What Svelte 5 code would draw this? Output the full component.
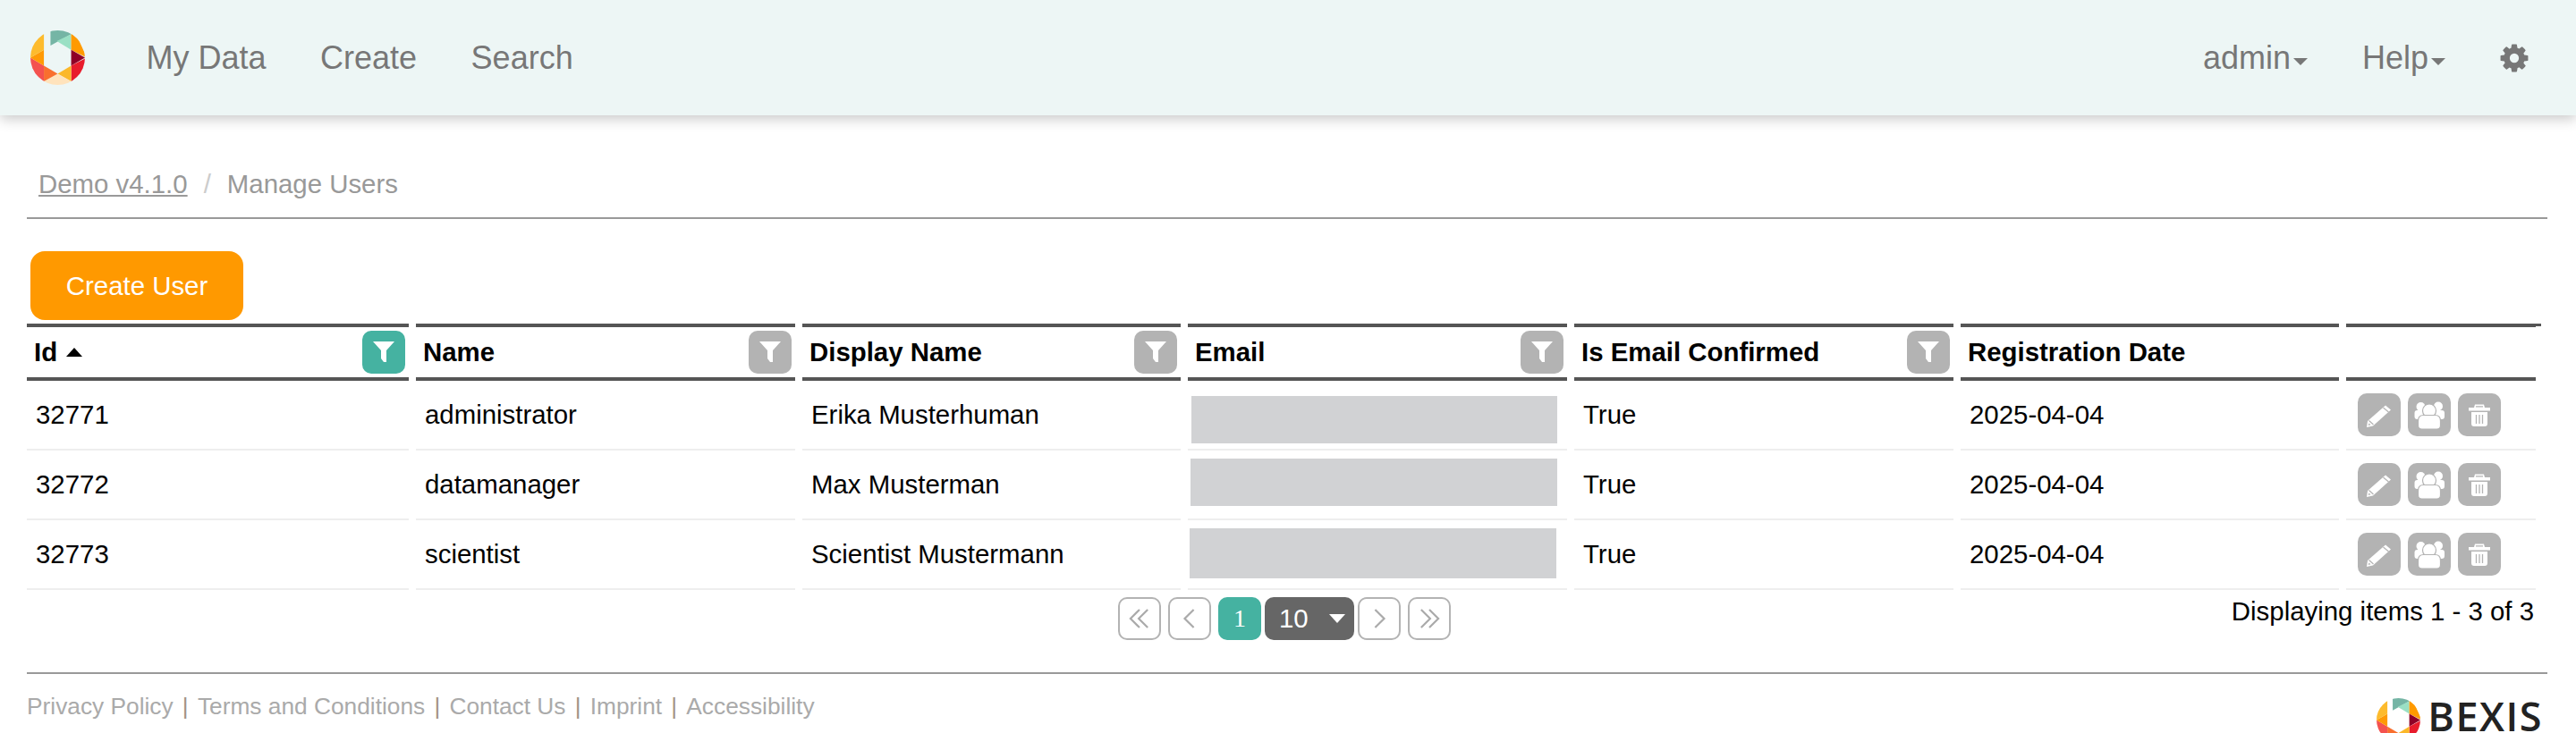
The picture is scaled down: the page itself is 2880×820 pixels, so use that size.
<script>
  const users = [
    { id: 32771, name: "administrator", display: "Erika Musterhuman", date: "2025-04-04" },
    { id: 32772, name: "datamanager", display: "Max Musterman", date: "2025-04-04" },
    { id: 32773, name: "scientist", display: "Scientist Mustermann", date: "2025-04-04" }
  ];

  const columns = [
    { title: "Id", sorted: true, active: true },
    { title: "Name" },
    { title: "Display Name" },
    { title: "Email" },
    { title: "Is Email Confirmed" },
    { title: "Registration Date", nofilter: true },
    { title: "", nofilter: true }
  ];

  const footerLinks = ["Privacy Policy", "Terms and Conditions", "Contact Us", "Imprint", "Accessibility"];

  const logoParts = [
    ["#75b5a5", "169,118 169,60 238,60 238,80"],
    ["#9ae0c4", "238,80 238,132 190,103"],
    ["#ff9a00", "238,80 250,70 290,158 238,132"],
    ["#8f0027", "238,132 284,158 238,185"],
    ["#e81c2c", "238,185 290,158 280,250 238,237"],
    ["#fbb82a", "238,185 238,237 193,212"],
    ["#ffe3bc", "147,237 193,212 238,237 238,260 147,260"],
    ["#f96f2e", "147,185 193,212 147,237"],
    ["#f4524f", "102,158 147,185 147,237 147,260 90,250 90,158"],
    ["#ff9a05", "102,158 147,132 147,185"],
    ["#fdbb2d", "147,70 147,132 102,158 90,158 90,70"]
  ];
</script>

{#snippet logo(cls)}
  <svg class={cls} viewBox="102 67 182 182">
    <defs>
      <clipPath id="clip-{cls}"><circle cx="193" cy="158" r="91" /></clipPath>
    </defs>
    <g clip-path="url(#clip-{cls})">
      {#each logoParts as part}
        <polygon fill={part[0]} points={part[1]} />
      {/each}
    </g>
  </svg>
{/snippet}

{#snippet filterIcon()}
  <svg viewBox="0 0 48 48"><polygon fill="#fff" points="12,12 36,12 27,22 27,35 24,35 21,31 21,22" /></svg>
{/snippet}

<header class="navbar">
  {@render logo("brand")}
  <nav class="nav_left">
    <a>My Data</a>
    <a>Create</a>
    <a>Search</a>
  </nav>
  <nav class="nav_right">
    <a class="admin">admin<span class="caret"></span></a>
    <a class="help">Help<span class="caret"></span></a>
    <svg class="gear" viewBox="0 0 1792 1792"><path fill="#777" d="M1152 896q0-106-75-181t-181-75-181 75-75 181 75 181 181 75 181-75 75-181zm512-109v222q0 12-8 23t-20 13l-185 28q-19 54-39 91 35 50 107 138 10 12 10 25t-9 23q-27 37-99 108t-94 71q-12 0-26-9l-138-108q-44 23-91 38-16 136-29 186-7 28-36 28h-222q-14 0-24.5-8.5t-11.5-21.5l-28-184q-49-16-90-37l-141 107q-10 9-25 9-14 0-25-11-126-114-165-168-7-10-7-23 0-12 8-23 15-21 51-66.5t54-70.5q-27-50-41-99l-183-27q-13-2-21-12.5t-8-23.5v-222q0-12 8-23t19-13l186-28q14-46 39-92-40-57-107-138-10-12-10-24 0-10 9-23 26-36 98.5-107.5t94.5-71.5q13 0 26 10l138 107q44-23 91-38 16-136 29-186 7-28 36-28h222q14 0 24.5 8.5t11.5 21.5l28 184q49 16 90 37l142-107q9-9 24-9 13 0 25 10 129 119 165 170 7 8 7 22 0 12-8 23-15 21-51 66.5t-54 70.5q26 50 41 98l183 28q13 2 21 12.5t8 23.5z" /></svg>
  </nav>
</header>

<main class="content">
  <div class="breadcrumb">
    <a>Demo v4.1.0</a>
    <span class="slash">/</span>
    <span>Manage Users</span>
  </div>

  <button class="create">Create User</button>

  <table class="grid">
    <colgroup>
      <col class="c427" /><col class="c424" /><col class="c423" /><col class="c424" />
      <col class="c424" /><col class="c423" /><col class="c212" />
    </colgroup>
    <thead>
      <tr>
        {#each columns as col}
          <th>
            <div class="th_inner">
              <span>{col.title}</span>
              {#if col.sorted}<span class="sort"></span>{/if}
              {#if !col.nofilter}
                <span class="filter" class:active={col.active}>{@render filterIcon()}</span>
              {/if}
            </div>
          </th>
        {/each}
      </tr>
    </thead>
    <tbody>
      {#each users as user, i}
        <tr>
          <td>{user.id}</td>
          <td>{user.name}</td>
          <td>{user.display}</td>
          <td class="email_cell"><div class="redacted r{i}"></div></td>
          <td>True</td>
          <td>{user.date}</td>
          <td class="actions_cell">
            <div class="actions">
              <span class="action">
                <svg viewBox="0 0 48 48">
                  <path fill="#fff" d="M31 13.500l6 5-20 18-7 1.500 1-7z" />
                  <path fill="none" stroke="#b3b3b3" stroke-width="1.2" d="M28.500 16l6 5M12.500 30.500l5 4.500" />
                  <path fill="#b3b3b3" d="M12.500 33.500l2 1.800-2.800.8z" />
                </svg>
              </span>
              <span class="action">
                <svg viewBox="0 0 48 48">
                  <circle fill="#fff" cx="14.500" cy="15" r="5" />
                  <circle fill="#fff" cx="34" cy="14.500" r="5" />
                  <path fill="#fff" d="M7.500 22q0-3 3-3h7q3 0 3 3v7h-10q-3 0-3-3zM28 22q0-3 3-3h7q3 0 3 3v4q0 3-3 3H28z" />
                  <circle fill="#fff" stroke="#b3b3b3" stroke-width="1.200" cx="24" cy="19.500" r="7.500" />
                  <path fill="#fff" stroke="#b3b3b3" stroke-width="1.200" d="M11.500 31q0-6.500 6-6.500h13q6 0 6 6.500v5q0 4-4 4h-17q-4 0-4-4z" />
                </svg>
              </span>
              <span class="action">
                <svg viewBox="0 0 48 48">
                  <path fill="#fff" d="M12 16h6l1-3.500h10l1 3.500h6v3.500H12zM15 21h18v13q0 3-3 3H18q-3 0-3-3z" />
                  <path fill="none" stroke="#b3b3b3" stroke-width="1.300" d="M20 14.800h8M20.500 24v10M24 24v10M27.500 24v10" />
                </svg>
              </span>
            </div>
          </td>
        </tr>
      {/each}
    </tbody>
  </table>

  <div class="pager_row">
    <div class="pager">
      <span class="page_btn"><svg viewBox="0 0 48 48"><path d="M24 13l-11 11 11 11M34 13L23 24l11 11" /></svg></span>
      <span class="page_btn"><svg viewBox="0 0 48 48"><path d="M29 13L18 24l11 11" /></svg></span>
      <span class="page_current">1</span>
      <span class="page_size">10<span class="size_caret"></span></span>
      <span class="page_btn"><svg viewBox="0 0 48 48"><path d="M19 13l11 11-11 11" /></svg></span>
      <span class="page_btn"><svg viewBox="0 0 48 48"><path d="M14 13l11 11-11 11M24 13l11 11-11 11" /></svg></span>
    </div>
    <div class="page_info">Displaying items 1 - 3 of 3</div>
  </div>

  <footer class="footer">
    <div class="footer_links">
      {#each footerLinks as link, i}
        {#if i > 0}<span class="sep">|</span>{/if}
        <a>{link}</a>
      {/each}
    </div>
    <div class="bexis">
      {@render logo("brand_small")}
      <span class="bexis_name">BEXIS</span>
    </div>
  </footer>
</main>

<style>
  :global(body) {
    margin: 0;
    overflow: hidden;
    background: #fff;
    font-family: "Liberation Sans", Arial, sans-serif;
    font-size: 29.4px;
    color: #000;
  }

  .navbar {
    display: flex;
    align-items: center;
    height: 129px;
    padding: 0 54px 0 34px;
    background: #edf6f5;
    box-shadow: 0 4px 14px rgba(0, 0, 0, 0.22);
    font-size: 36px;
    color: #777;
  }
  :global(.brand) {
    width: 61px;
    height: 61px;
  }
  .nav_left {
    display: flex;
    gap: 60.5px;
    margin-left: 68.500px;
  }
  .nav_right {
    display: flex;
    align-items: center;
    margin-left: auto;
  }
  .admin {
    margin-right: 61px;
  }
  .help {
    margin-right: 59px;
  }
  .caret {
    display: inline-block;
    margin-left: 3px;
    vertical-align: 4px;
    border-top: 8px solid #777;
    border-left: 8px solid transparent;
    border-right: 8px solid transparent;
  }
  .gear {
    width: 36px;
    height: 36px;
    margin-right: -3px;
  }

  .content {
    padding: 0 32px 0 30px;
  }

  .breadcrumb {
    display: flex;
    padding: 58px 0 18px 13px;
    line-height: 38px;
    color: #999;
    border-bottom: 2px solid #999;
    font-size: 29.4px;
  }
  .breadcrumb a {
    text-decoration: underline;
  }
  .slash {
    padding: 0 18px;
    color: #ccc;
  }

  .create {
    display: block;
    width: 238px;
    height: 77px;
    margin: 36px 0 4px 4px;
    padding: 0;
    border: none;
    border-radius: 16px;
    background: #ff9900;
    color: #fff;
    font: inherit;
  }

  .grid {
    table-layout: fixed;
    width: 2805px;
    border-collapse: separate;
    border-spacing: 8px 0;
    margin-left: -8px;
  }
  .c427 { width: 427px; }
  .c424 { width: 424px; }
  .c423 { width: 423px; }
  .c212 { width: 212px; }
  th {
    height: 56px;
    padding: 0;
    border-top: 4px solid #555;
    border-bottom: 4px solid #555;
    text-align: left;
  }
  th:last-child {
    position: relative;
  }
  /* the top rule runs on a little past the last column */
  th:last-child::before {
    content: "";
    position: absolute;
    top: -4px;
    left: 100%;
    width: 6px;
    height: 3px;
    background: #555;
  }
  .th_inner {
    display: flex;
    align-items: center;
    height: 56px;
    padding: 0 4px 0 8px;
    font-size: 29.4px;
  }
  .sort {
    width: 0;
    height: 0;
    margin-left: 10px;
    border-bottom: 10px solid #000;
    border-left: 9px solid transparent;
    border-right: 9px solid transparent;
  }
  .filter {
    display: block;
    width: 48px;
    height: 48px;
    margin-left: auto;
    border-radius: 10px;
    background: #b3b3b3;
  }
  .filter.active {
    background: #45b2a1;
  }
  .filter svg,
  .action svg {
    display: block;
    width: 48px;
    height: 48px;
  }
  td {
    height: 76px;
    padding: 0 0 0 10px;
    border-bottom: 2px solid #eee;
  }
  td.email_cell {
    padding: 0 11px 0 0;
  }
  .redacted {
    background: #d1d2d4;
  }
  .r0 {
    height: 53px;
    margin: 11px 0 0 4px;
  }
  .r1 {
    height: 53px;
    margin: 0 0 5px 3px;
  }
  .r2 {
    height: 56px;
    margin: 0 1px 2px 2px;
  }
  td.actions_cell {
    padding-left: 13px;
  }
  .actions {
    display: flex;
    gap: 8px;
  }
  .action {
    width: 48px;
    height: 48px;
    border-radius: 10px;
    background: #b3b3b3;
  }

  .pager_row {
    display: flex;
    align-items: flex-start;
    margin-top: 7px;
  }
  .pager {
    display: flex;
    align-items: center;
    height: 49px;
    margin-left: 1220px;
  }
  .page_btn {
    box-sizing: border-box;
    width: 48px;
    height: 48px;
    margin-right: 8px;
    border: 2px solid #b3b3b3;
    border-radius: 10px;
  }
  .page_btn svg {
    display: block;
    width: 44px;
    height: 44px;
    fill: none;
    stroke: #aaa;
    stroke-width: 2.4;
  }
  .page_current {
    width: 48px;
    height: 48px;
    border-radius: 10px;
    background: #45b2a1;
    color: #fff;
    font-family: "Liberation Serif", serif;
    font-size: 28px;
    line-height: 48px;
    text-align: center;
  }
  .page_size {
    display: flex;
    align-items: center;
    box-sizing: border-box;
    width: 100px;
    height: 48px;
    margin: 1px 4px 0;
    padding-left: 16px;
    border-radius: 10px;
    background: #666;
    color: #fff;
  }
  .size_caret {
    margin-left: 23px;
    border-top: 10px solid #fff;
    border-left: 9px solid transparent;
    border-right: 9px solid transparent;
  }
  .page_info {
    margin-left: auto;
    padding-right: 15px;
    line-height: 34px;
  }

  .footer {
    display: flex;
    justify-content: space-between;
    box-sizing: border-box;
    height: 68px;
    margin-top: 36px;
    border-top: 2px solid #999;
    overflow: hidden;
  }
  .footer_links {
    display: flex;
    gap: 10.2px;
    padding-top: 21px;
    font-size: 26.3px;
    line-height: 30px;
    color: #aaa;
  }
  .sep {
    color: #a39384;
  }
  .bexis {
    display: flex;
    padding: 27px 5px 0 0;
  }
  :global(.brand_small) {
    width: 49px;
    height: 49px;
  }
  .bexis_name {
    margin: 1px 0 0 8px;
    font-family: "Open Sans", sans-serif;
    font-size: 45px;
    font-weight: 600;
    line-height: 38px;
    letter-spacing: 1.5px;
    color: #222;
  }
</style>
